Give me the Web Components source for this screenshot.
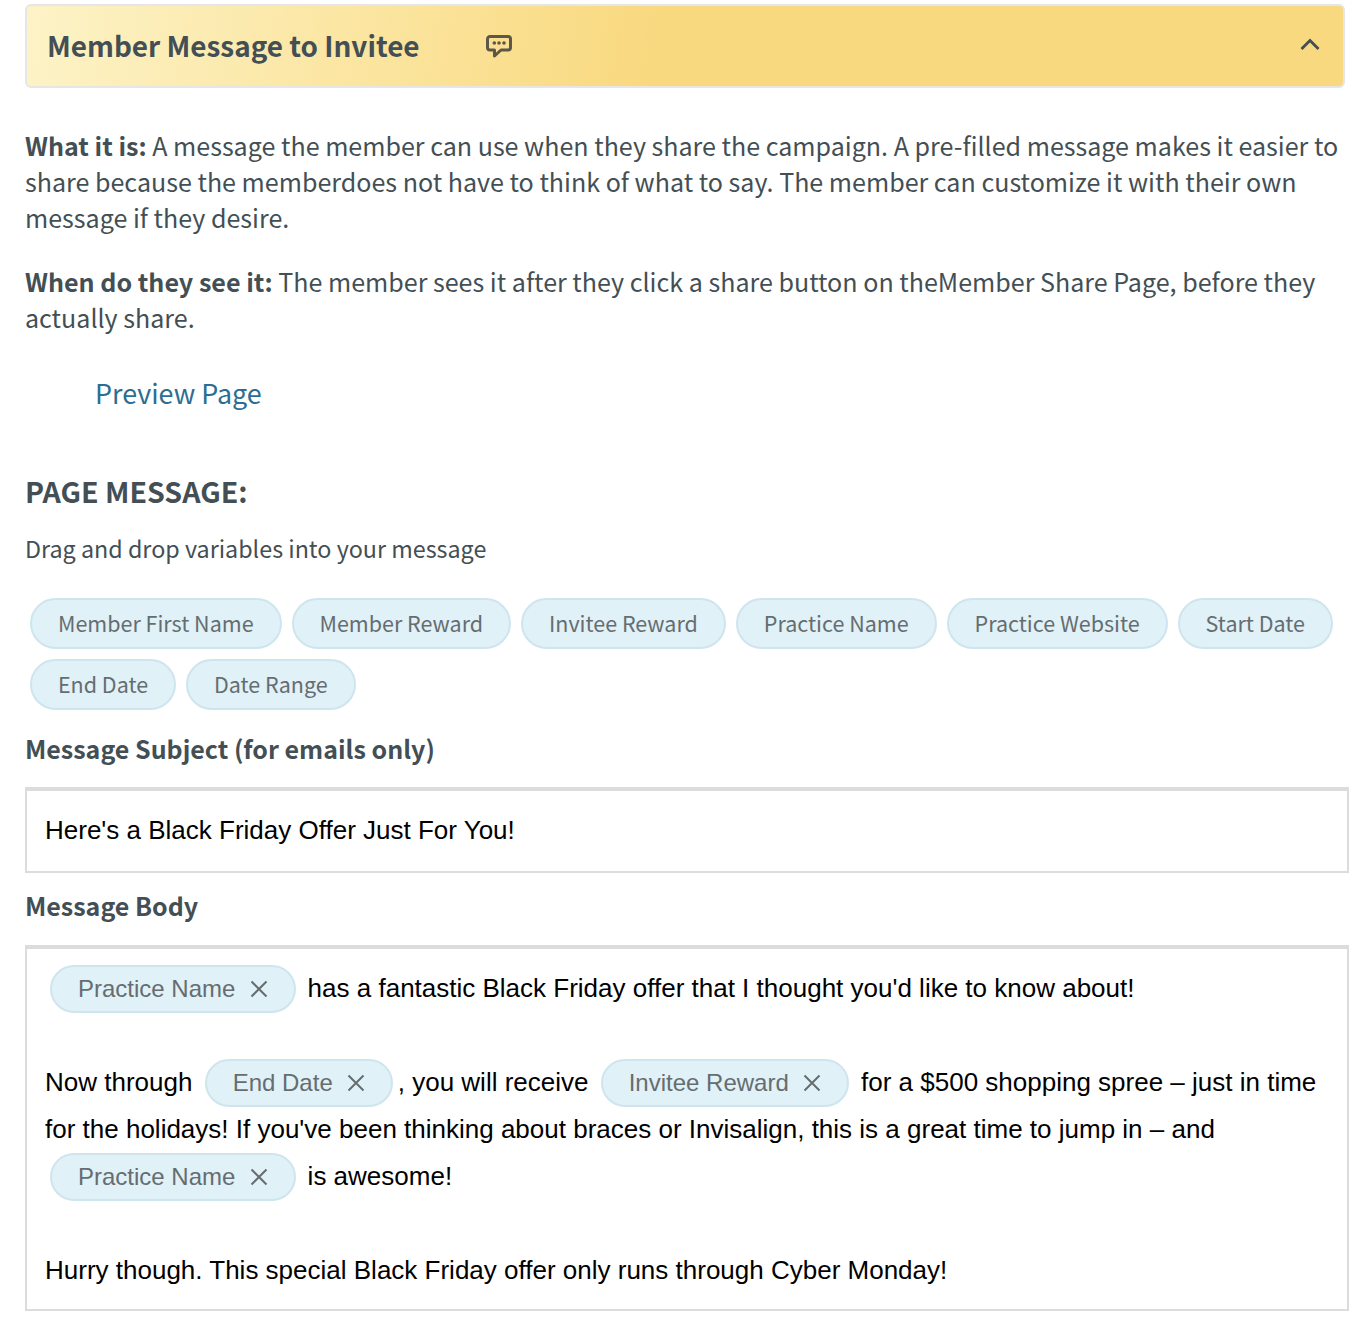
<!DOCTYPE html>
<html><head><meta charset="utf-8"><title>Member Message</title>
<style>
html,body{margin:0;padding:0;background:#fff}
body{width:1372px;height:1332px;overflow:hidden;font-family:"Noto Sans CJK SC","Noto Sans",sans-serif;color:#434f54}
</style></head><body>
<message-page></message-page>
<template id="t-page"><style>
:host{display:block;padding:4px 23px 0 25px}
p{margin:0;font-size:25.070px;line-height:36px}
b{font-weight:700}
.p1{margin-top:39px}
.p2{margin-top:28px}
a{display:block;margin:38px 0 0 70px;font-size:26.9px;line-height:40px;color:#2c6e91;text-decoration:none;width:max-content}
h2{margin:58px 0 0;font-size:28.6px;line-height:40px;font-weight:700}
.hint{margin-top:19px;font-size:23.3px;line-height:36px}
.chips{display:flex;flex-wrap:wrap;gap:10px 10px;margin:32px 0 0 5px;}
h3{margin:18px 0 0;font-size:25px;line-height:40px;font-weight:700}
</style>
<panel-header><span>Member Message to Invitee</span></panel-header>
<p class="p1"><b>What it is:</b> A message the member can use when they share the campaign. A pre-filled message makes it easier to share because the memberdoes not have to think of what to say. The member can customize it with their own message if they desire.</p>
<p class="p2"><b>When do they see it:</b> The member sees it after they click a share button on theMember Share Page, before they actually share.</p>
<a href="#">Preview Page</a>
<h2>PAGE MESSAGE:</h2>
<p class="hint">Drag and drop variables into your message</p>
<div class="chips">
<var-chip>Member First Name</var-chip><var-chip>Member Reward</var-chip><var-chip>Invitee Reward</var-chip><var-chip>Practice Name</var-chip><var-chip>Practice Website</var-chip><var-chip>Start Date</var-chip><var-chip>End Date</var-chip><var-chip>Date Range</var-chip>
</div>
<h3>Message Subject (for emails only)</h3>
<text-box class="subject" style="margin-top:19px">Here's a Black Friday Offer Just For You!</text-box>
<h3 style="margin-top:12px">Message Body</h3>
<text-box class="body" style="margin-top:20px"><tag-chip>Practice Name</tag-chip> has a fantastic Black Friday offer that I thought you'd like to know about!<br><br>Now through <tag-chip>End Date</tag-chip>, you will receive <tag-chip>Invitee Reward</tag-chip> for a $500 shopping spree – just in time for the holidays! If you've been thinking about braces or Invisalign, this is a great time to jump in – and <tag-chip>Practice Name</tag-chip> is awesome!<br><br>Hurry though. This special Black Friday offer only runs through Cyber Monday!</text-box>
</template>
<template id="t-header"><style>
:host{display:flex;align-items:center;box-sizing:border-box;height:84px;width:1320px;border:2px solid #e6e6e6;border-radius:6px;background:linear-gradient(100deg,#fdf3c7 0%,#f9d97f 48%,#f9d97f 100%);padding:0 23px 2px 20px;color:#434f54}
.t{font-size:27.9px;font-weight:700;line-height:40px;width:439px;flex:none}
svg{display:block}
.c{margin-left:auto}
</style><span class="t"><slot></slot></span>
<svg width="28" height="28" viewBox="0 0 28 28" fill="none" stroke="#5c5747" stroke-width="3" stroke-linejoin="round"><path d="M4 5.500h18a2.500 2.500 0 0 1 2.500 2.500v8.500a2.500 2.500 0 0 1-2.500 2.500h-7l-6.500 6V19H4a2.500 2.500 0 0 1-2.500-2.500V8A2.500 2.500 0 0 1 4 5.500z"/><g fill="#5c5747" stroke="none"><circle cx="8.300" cy="12" r="1.800"/><circle cx="13" cy="12" r="1.800"/><circle cx="18" cy="12" r="1.800"/></g></svg>
<svg class="c" width="20" height="14" viewBox="0 0 20 14" fill="none" stroke="#434f54" stroke-width="2.800"><path d="M1.500 11L10 2.500L18.500 11"/></svg>
</template>
<template id="t-var"><style>
:host{display:block;box-sizing:border-box;height:51px;border:2px solid #cfe5ee;border-radius:26px;background:#e0f1f8;padding:0 25.950px;font-size:21.5px;line-height:45px;color:#666d70}
</style><slot></slot></template>
<template id="t-tag"><style>
:host{display:inline-flex;align-items:center;box-sizing:border-box;height:48px;border:2px solid #cfe5ee;border-radius:24px;background:#e0f1f8;padding:0 26px;margin:-2px 4.500px -2px 5px;vertical-align:middle;font-family:"Liberation Sans",sans-serif;font-size:24px;line-height:44px;color:#666d70;position:relative;top:-1px}
svg{margin-left:14.500px;display:block}
</style><slot></slot><svg width="18" height="18" viewBox="0 0 18 18" stroke="#666d70" stroke-width="2" fill="none"><path d="M1.500 1.500L16.500 16.500M16.500 1.500L1.500 16.500"/></svg></template>
<template id="t-box"><style>
:host{display:block;box-sizing:border-box;width:1324px;border:2px solid #dcdcdc;border-top-width:4px;background:#fff;font-family:"Liberation Sans",sans-serif;font-size:26px;color:#000;padding:0 18px}
:host(.subject){height:86px;line-height:78px}
:host(.body){height:366px;padding-top:16px;line-height:47px}
</style><slot></slot></template>
<script>
function def(name,id){customElements.define(name,class extends HTMLElement{constructor(){super();this.attachShadow({mode:'open'}).appendChild(document.getElementById(id).content.cloneNode(true));}});}
def('message-page','t-page');def('panel-header','t-header');def('var-chip','t-var');def('tag-chip','t-tag');def('text-box','t-box');
</script>
</body></html>
